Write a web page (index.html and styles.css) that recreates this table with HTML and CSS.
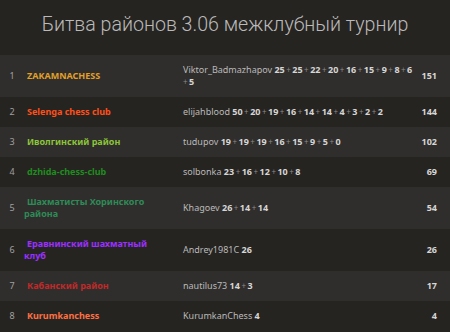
FILE: index.html
```html
<!DOCTYPE html>
<html lang="ru">
<head>
<meta charset="utf-8">
<link rel="stylesheet" href="styles.css">
</head>
<body>
<div class="page">
  <h1 class="title">Битва районов 3.06 межклубный турнир</h1>
  <table class="standing">
    <colgroup>
      <col class="col-rank">
      <col class="col-team">
      <col class="col-players">
      <col class="col-total">
    </colgroup>
    <tbody>
      <tr class="odd">
        <td class="rank">1</td>
        <td class="team c1">ZAKAMNACHESS</td>
        <td class="players">Viktor_Badmazhapov <span class="nb"><b>25</b><i>+</i><b>25</b><i>+</i><b>22</b><i>+</i><b>20</b><i>+</i><b>16</b><i>+</i><b>15</b><i>+</i><b>9</b><i>+</i><b>8</b><i>+</i><b>6</b></span> <span class="nb"><i class="first">+</i><b>5</b></span></td>
        <td class="total">151</td>
      </tr>
      <tr class="even">
        <td class="rank">2</td>
        <td class="team c2">Selenga chess club</td>
        <td class="players">elijahblood <span class="nb"><b>50</b><i>+</i><b>20</b><i>+</i><b>19</b><i>+</i><b>16</b><i>+</i><b>14</b><i>+</i><b>14</b><i>+</i><b>4</b><i>+</i><b>3</b><i>+</i><b>2</b><i>+</i><b>2</b></span></td>
        <td class="total">144</td>
      </tr>
      <tr class="odd">
        <td class="rank">3</td>
        <td class="team c3">Иволгинский район</td>
        <td class="players">tudupov <span class="nb"><b>19</b><i>+</i><b>19</b><i>+</i><b>19</b><i>+</i><b>16</b><i>+</i><b>15</b><i>+</i><b>9</b><i>+</i><b>5</b><i>+</i><b>0</b></span></td>
        <td class="total">102</td>
      </tr>
      <tr class="even">
        <td class="rank">4</td>
        <td class="team c4">dzhida-chess-club</td>
        <td class="players">solbonka <span class="nb"><b>23</b><i>+</i><b>16</b><i>+</i><b>12</b><i>+</i><b>10</b><i>+</i><b>8</b></span></td>
        <td class="total">69</td>
      </tr>
      <tr class="odd">
        <td class="rank">5</td>
        <td class="team c5">Шахматисты Хоринского района</td>
        <td class="players">Khagoev <span class="nb"><b>26</b><i>+</i><b>14</b><i>+</i><b>14</b></span></td>
        <td class="total">54</td>
      </tr>
      <tr class="even">
        <td class="rank">6</td>
        <td class="team c6">Еравнинский шахматный клуб</td>
        <td class="players">Andrey1981C <b>26</b></td>
        <td class="total">26</td>
      </tr>
      <tr class="odd">
        <td class="rank">7</td>
        <td class="team c7">Кабанский район</td>
        <td class="players">nautilus73 <span class="nb"><b>14</b><i>+</i><b>3</b></span></td>
        <td class="total">17</td>
      </tr>
      <tr class="even">
        <td class="rank">8</td>
        <td class="team c8">Kurumkanchess</td>
        <td class="players">KurumkanChess <b>4</b></td>
        <td class="total">4</td>
      </tr>
    </tbody>
  </table>
</div>
</body>
</html>
```
FILE: styles.css
```css
html, body {
  margin: 0;
  padding: 0;
  background: #262421;
}
.page {
  width: 450px;
  font-family: "Noto Sans", "Liberation Sans", sans-serif;
  color: #bababa;
}
.title {
  margin: 0;
  height: 55px;
  line-height: 50px;
  text-align: center;
  font-family: Roboto, "Noto Sans", sans-serif;
  font-weight: 300;
  font-size: 19.6px;
  color: #bababa;
}
.standing {
  width: 450px;
  table-layout: fixed;
  border-collapse: collapse;
  font-size: 9px;
  line-height: 12px;
}
.col-rank { width: 24px; }
.col-team { width: 159px; }
.col-players { width: 234px; }
.col-total { width: 33px; }
.standing td {
  padding: 9px 0;
  vertical-align: middle;
}
.odd { background: #302e2c; }
.even { background: #262421; }
.rank {
  text-align: center;
  color: #a0a0a0;
}
.team {
  padding-right: 30px !important;
  font-weight: 700;
  text-indent: 3px;
}
.players {
  color: #bababa;
}
.nb {
  white-space: nowrap;
}
.players b {
  font-weight: 700;
  color: #d6d6d6;
}
.players i {
  font-style: normal;
  font-size: 8px;
  color: #8a8a8a;
  padding: 0 1.5px;
}
.players i.first {
  padding-left: 0;
}
.total {
  text-align: right;
  padding-right: 13px !important;
  font-weight: 700;
  color: #d6d6d6;
}
.c1 { color: #e0a02a; }
.c2 { color: #ff4f1a; }
.c3 { color: #8cc43a; }
.c4 { color: #1f8c1f; }
.c5 { color: #2e8b57; }
.c6 { color: #9b30ff; }
.c7 { color: #c02a2a; }
.c8 { color: #ff7043; }
```
